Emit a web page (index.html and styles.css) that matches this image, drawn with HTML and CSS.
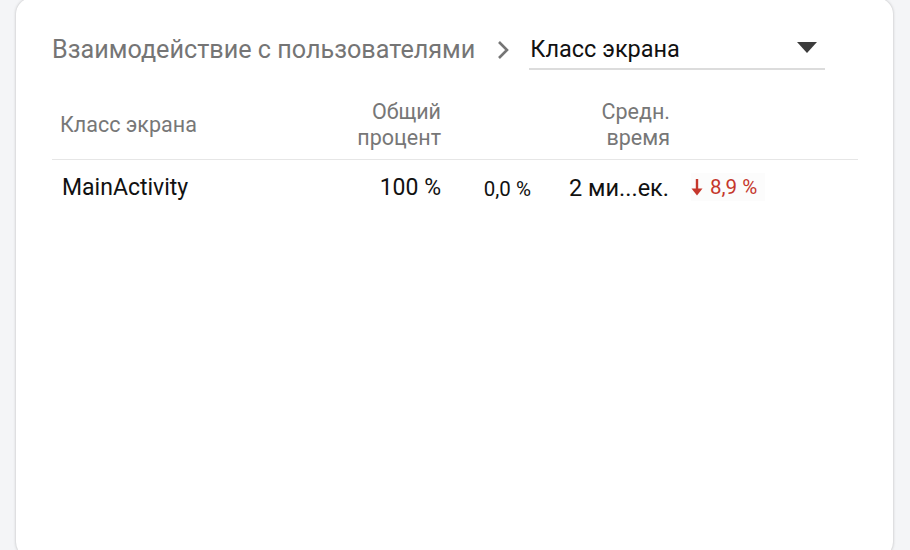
FILE: index.html
```html
<!DOCTYPE html>
<html lang="ru">
<head>
    <meta charset="UTF-8">
    <title>Класс экрана</title>
    <link rel="stylesheet" href="styles.css">
</head>
<body>
    <div class="card">
        <div class="crumbs">
            <span class="crumb-parent">Взаимодействие с пользователями</span>
            <svg class="chevron" width="14" height="20" viewBox="0 0 14 20"><path d="M3 2 L11 10 L3 18" fill="none" stroke="#757575" stroke-width="2.6"/></svg>
            <div class="select">
                <span>Класс экрана</span>
                <svg class="caret" width="20" height="12" viewBox="0 0 20 12"><path d="M0 0 H20 L10 11 Z" fill="#3c3c3c"/></svg>
            </div>
        </div>

        <div class="table">
            <div class="row head">
                <div class="cell name">Класс экрана</div>
                <div class="cell num">Общий<br>процент</div>
                <div class="cell num"></div>
                <div class="cell num">Средн.<br>время</div>
                <div class="cell"></div>
            </div>
            <div class="row">
                <div class="cell name">MainActivity</div>
                <div class="cell num">100 %</div>
                <div class="cell num small">0,0 %</div>
                <div class="cell num time">2 ми...ек.</div>
                <div class="cell">
                    <span class="delta">
                        <svg width="12" height="17" viewBox="0 0 12 17"><path d="M6 0 V13" stroke="#c5372c" stroke-width="2.4"/><path d="M0.5 9.5 L6 16.5 L11.5 9.5 Z" fill="#c5372c"/></svg>
                        8,9 %
                    </span>
                </div>
            </div>
        </div>
    </div>
</body>
</html>
```

FILE: styles.css
```css
body {
    margin: 0;
    background-color: #f4f5f7;
    font-family: Roboto, "Noto Sans", sans-serif;
    height: 550px;
    overflow: hidden;
}
.card {
    margin: -2px 0 0 16px;
    width: 877px;
    height: 560px;
    background-color: #ffffff;
    border-radius: 16px;
    box-shadow: 0 0 3px rgba(0, 0, 0, 0.25);
    box-sizing: border-box;
    padding: 31px 35px 0 36px;
}
.crumbs {
    display: flex;
    align-items: center;
    height: 40px;
}
.crumb-parent {
    color: #757575;
    font-size: 25.2px;
    margin-top: 1px;
}
.chevron {
    margin: 1px 19px 0 21px;
}
.select {
    display: flex;
    align-items: center;
    justify-content: space-between;
    width: 296px;
    height: 40px;
    box-sizing: border-box;
    padding: 0 8px 0 1px;
    font-size: 23.5px;
    color: #111;
    border-bottom: 2px solid #dcdcdc;
    margin-top: 2px;
}
.caret {
    margin-top: -2px;
}
.table {
    margin-top: 30px;
    width: 806px;
}
.row {
    display: grid;
    grid-template-columns: 288px 101px 90px 139px 1fr;
    align-items: center;
    height: 55px;
    font-size: 23px;
    color: #111;
}
.row.head {
    height: 61px;
    box-sizing: border-box;
    font-size: 21.5px;
    line-height: 26px;
    color: #777;
    border-bottom: 1px solid #e6e6e6;
    padding-bottom: 9px;
    align-items: end;
}
.row.head .cell.name {
    align-self: center;
    padding-left: 8px;
}
.cell.name {
    padding-left: 10px;
}
.cell.num {
    text-align: right;
}
.cell.time {
    font-size: 23.5px;
    padding-right: 1px;
}
.cell.small {
    font-size: 20.5px;
    padding-top: 2px;
}
.delta {
    display: inline-flex;
    align-items: center;
    gap: 7px;
    margin-left: 21px;
    padding: 2px 8px 2px 0;
    color: #c5372c;
    font-size: 20.5px;
    background-color: #fcfcfc;
}
```
